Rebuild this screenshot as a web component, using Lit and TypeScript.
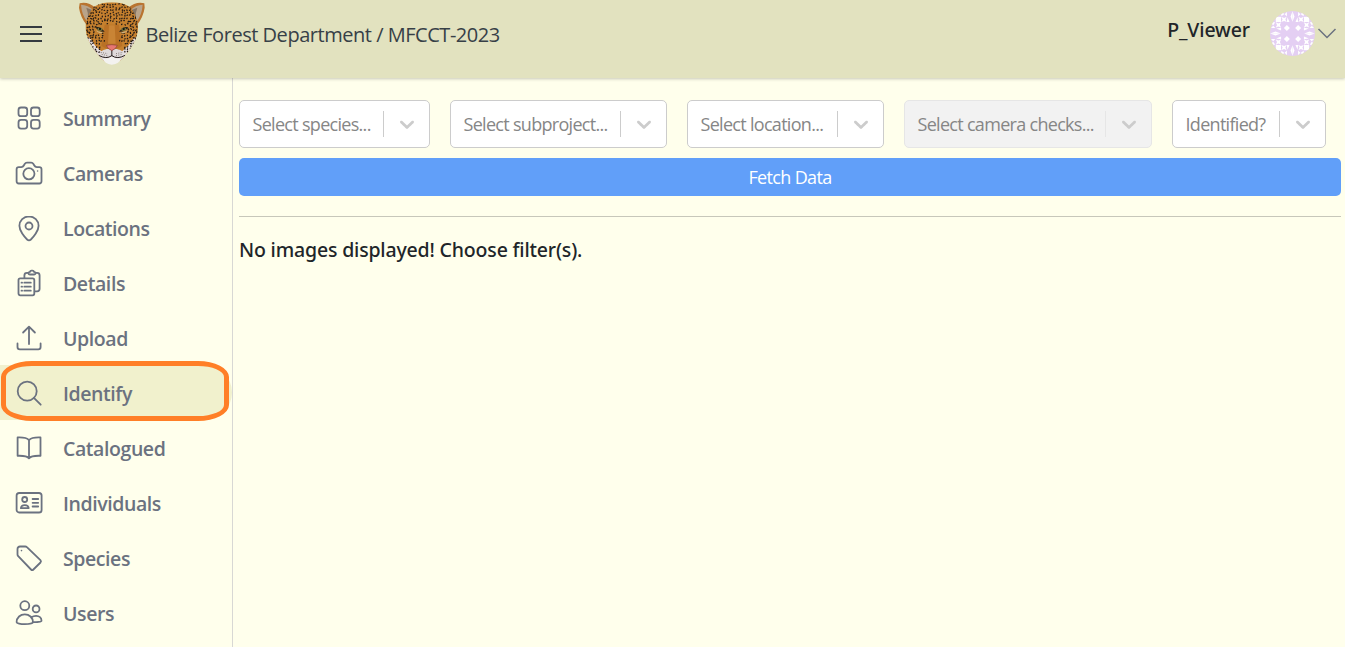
import { LitElement, html, svg, css } from "lit";
import { customElement, property } from "lit/decorators.js";

const icons: Record<string, unknown> = {
  summary: svg`<rect x="3.5" y="3.5" width="8.7" height="8.7" rx="2.5"/><rect x="16" y="3.5" width="8.7" height="8.7" rx="2.5"/><rect x="3.5" y="15.9" width="8.7" height="8.7" rx="2.5"/><rect x="16" y="15.9" width="8.7" height="8.7" rx="2.5"/>`,
  camera: svg`<path d="M3.8 8.1h2.5c1.3 0 1.9-.5 2.5-1.6l.9-1.6C10.300 4 11 3.700 11.900 3.700h4.300c.9 0 1.600.3 2.200 1.200l.9 1.600c.6 1.100 1.200 1.600 2.500 1.600h2.500c1.300 0 2.200.9 2.200 2.200v12c0 1.300-.9 2.200-2.200 2.200H3.800c-1.300 0-2.200-.9-2.200-2.200v-12c0-1.300.9-2.200 2.200-2.200z"/><circle cx="13.900" cy="14.800" r="5.600"/><circle cx="22.600" cy="12" r=".8" fill="currentColor" stroke="none"/>`,
  location: svg`<path d="M14 2.300c-5.400 0-9.600 4.200-9.600 9.500 0 5 5 11.200 7.700 13.700 1.200 1.100 2.600 1.100 3.800 0 2.700-2.500 7.700-8.700 7.700-13.700 0-5.300-4.200-9.500-9.600-9.500z"/><circle cx="14" cy="12" r="3.500"/>`,
  details: svg`<path d="M9.400 9.200V6.400c0-1.600.9-2.500 2.500-2.500h1.300M20.800 3.900h1.400c1.500 0 2.400.9 2.400 2.500v13.400c0 1.600-.9 2.500-2.500 2.500h-2.400"/><path d="M14.900 2.900c.3-.9.800-1.300 1.500-1.300h1.200c.7 0 1.200.4 1.500 1.300.8.100 1.500.5 1.500 1.100 0 .9-.7 1.500-1.700 1.500h-3.800c-1 0-1.700-.6-1.700-1.500 0-.6.700-1 1.500-1.100z"/><rect x="3.500" y="9.300" width="15.800" height="17" rx="1.700"/><path d="M9.300 13.700h6.500M9.300 17.700h6.500M9.300 21.700h6.500M6.500 13.700h.6M6.500 17.700h.6M6.500 21.700h.6"/>`,
  upload: svg`<path d="M14 20V2.600M8.100 8.500 14 2.600l5.900 5.900M2.500 19.500V23c0 1.500.8 2.300 2.300 2.300h18.500c1.500 0 2.300-.8 2.300-2.300v-3.500"/>`,
  search: svg`<circle cx="12.200" cy="12.200" r="9.500"/><path d="m18.900 18.900 6.800 6.800"/>`,
  book: svg`<path d="M14 6.100C12 3.900 7.800 3.300 2.600 3.500v18.300c5-.2 9.400.1 11.400 2.500 2-2.400 6.500-2.700 11.500-2.500V3.500C20.300 3.300 16 3.900 14 6.100zM14 6.100v18"/>`,
  card: svg`<rect x="1.600" y="4" width="25" height="19.500" rx="2.600"/><circle cx="9.700" cy="10.500" r="2.500"/><path d="M5.900 19.200c.2-2.200 1.800-3.100 3.900-3.100s3.700.9 3.900 3.100zM17.600 10h5.600M17.600 13.800h5.600M17.600 17.500h5.600"/>`,
  tag: svg`<path d="M5 2.500h5.200c.7 0 1.200.2 1.700.7l13.500 12.900c.8.800.8 1.600.1 2.400l-7.100 7c-.8.800-1.600.8-2.400 0L3.200 12.200c-.4-.5-.7-1-.7-1.700V5c0-1.500 1-2.500 2.500-2.500z"/><circle cx="6.500" cy="6.600" r=".8" fill="currentColor" stroke="none"/>`,
  users: svg`<circle cx="9.800" cy="6.700" r="4.500"/><circle cx="21.100" cy="9.900" r="3.400"/><path d="M1.600 23.300c0-5 3.800-7.900 8.200-7.900s8.100 2.900 8.100 7.900c0 1-3.700 1.800-8.100 1.800s-8.200-.8-8.200-1.800zM16.500 18.200c1.300-1 2.900-1.400 4.600-1.400 3.100 0 5.400 2 5.400 4.900 0 1.200-4.700 1.700-8.700 1.200"/>`,
};

@customElement("line-icon")
class LineIcon extends LitElement {
  @property() name = "";
  static styles = css`
    :host { display: block; width: 28px; height: 28px; }
    .glyph { display: block; width: 28px; height: 28px; fill: none; stroke: currentColor; stroke-width: 1.8; stroke-linecap: round; stroke-linejoin: round; }
  `;
  render() {
    return html`<svg class="glyph" viewBox="0 0 28 28">${icons[this.name]}</svg>`;
  }
}

@customElement("jaguar-logo")
class JaguarLogo extends LitElement {
  static styles = css`
    :host { display: block; width: 66px; height: 63px; }
    .face { display: block; width: 66px; height: 63px; }
  `;
  spots() {
    const out: unknown[] = [];
    let seed = 11;
    const rnd = () => ((seed = (seed * 16807) % 2147483647) / 2147483647);
    for (let y = 13; y < 160; y += 8.4) {
      for (let x = 50; x < 202; x += 8.6) {
        const px = x + rnd() * 5;
        const py = y + rnd() * 5;
        const angle = rnd() * 180;
        const dx = Math.abs(px - 125.5);
        const bridge = py > 74 && dx < (py < 130 ? 22 : 36);
        const eye = py > 80 && py < 99 && dx > 20 && dx < 48;
        if (bridge || eye) continue;
        const big = dx > 48 ? 3.6 : 2.8;
        out.push(svg`<ellipse cx=${px} cy=${py} rx=${big} ry="2.1" transform=${`rotate(${angle} ${px} ${py})`}/>`);
      }
    }
    return out;
  }
  render() {
    return html`<svg class="face" viewBox="27 8 198 189">
      <defs><clipPath id="head"><path d="M72 22Q95 9 125.500 9T179 22Q197 42 204 74Q206 102 193 128Q180 154 157 178Q146 190 125.500 190Q105 190 94 178Q71 154 58 128Q45 102 47 74Q54 42 72 22Z"/></clipPath></defs>
      <path fill="#b9742f" d="M29 12Q52 5 78 26L50 77Q31 53 27 25ZM223 12Q199 5 173 26L201 77Q220 53 224 25Z"/>
      <path fill="#b9a48a" d="M33 16Q53 16 73 34L52 68Q35 47 33 16ZM218 16Q198 16 178 34L199 68Q216 47 218 16Z"/>
      <path fill="#887663" d="M49 25L72 34L54 61Q56 41 49 25ZM202 25L179 34L197 61Q195 41 202 25Z"/>
      <g clip-path="url(#head)">
        <path fill="#c5802e" d="M40 5H212V190H40Z"/>
        <path fill="#e6dfe0" d="M45 108Q64 116 76 140L96 157Q125 137 155 157L176 138Q187 116 208 108V190H45Z"/>
        <path fill="#b97125" d="M104 76H147L157 139Q141 151 125.500 151T94 139Z"/>
        <path fill="#c98435" d="M117 78H134L137 133H114Z"/>
        <g fill="#241b15">${this.spots()}</g>
        <path fill="#cdb281" d="M78 93Q88 100 100 97L94 102Q82 101 78 93ZM173 93Q163 100 151 97L157 102Q169 101 173 93Z"/>
        <path fill="#29231b" d="M76 84Q91 79 104 97Q88 100 76 84ZM175 84Q160 79 147 97Q163 100 175 84Z"/>
        <ellipse cx="90" cy="90" rx="8" ry="5.500" fill="#77783f"/><ellipse cx="161" cy="90" rx="8" ry="5.500" fill="#77783f"/>
        <circle cx="90" cy="89" r="3.400" fill="#171713"/><circle cx="161" cy="89" r="3.400" fill="#171713"/>
        <path fill="#dfdadb" d="M125.500 151Q106 147 91 157Q91 176 110 177L125.500 169L141 177Q160 176 160 157Q145 147 125.500 151Z"/>
        <path fill="none" stroke="#241c1b" stroke-width="3" d="M86 168Q109 181 125.500 169Q142 181 165 168M125.500 150V170"/>
        <path fill="none" stroke="#5d4e49" stroke-width="2" stroke-dasharray="3 4" d="M92 159L113 163M95 165L113 169M138 163L159 159M138 169L156 165"/>
      </g>
      <path fill="#e77772" stroke="#884038" stroke-width="2" d="M109 138Q125.500 134 142 138Q139 148 125.500 154Q112 148 109 138Z"/>
      <path fill="#f3f2f0" d="M99 177Q112 180 125.500 172Q139 180 152 177Q149 195 125.500 196Q103 195 99 177Z"/>
    </svg>`;
  }
}

@customElement("identicon-avatar")
class IdenticonAvatar extends LitElement {
  static styles = css`
    :host { display: block; width: 45px; height: 45px; }
    .disc { display: block; width: 45px; height: 45px; border-radius: 50%; background: #e4cff3; }
  `;
  quarter() {
    return svg`
      <rect x="5.800" y="5.800" width="5.200" height="5.200"/>
      <path d="M16.900 13.900l3 3-3 3-3-3z"/>
      <path d="M11.300 1l3.200 2-3.200 2.300zM16.900 1l-2.200 2.200 2.200 2.200zM22.500 .2l-2 5.300 2 5.300zM11.300 5.800l2.800 1.200 2.500-1.200-1.200 2.600 1.200 2.700-2.500-1.200-2.800 1.200 1.300-2.700zM17.500 6.200l2 4.900h-2.700z"/>
      <path d="M1 11.300l2 3.200 2.300-3.200zM1 16.900l2.200-2.200 2.200 2.200zM.2 22.500l5.300-2 5.300 2zM5.800 11.300l1.200 2.800-1.200 2.500 2.600-1.200 2.700 1.200-1.200-2.500 1.200-2.800-2.700 1.300zM6.200 17.500l4.900 2v-2.700z"/>`;
  }
  render() {
    return html`<svg class="disc" viewBox="0 0 45 45"><g fill="#fff">
      <g>${this.quarter()}</g><g transform="translate(45 0) scale(-1 1)">${this.quarter()}</g>
      <g transform="translate(0 45) scale(1 -1)">${this.quarter()}</g><g transform="translate(45 45) scale(-1 -1)">${this.quarter()}</g>
    </g></svg>`;
  }
}

interface NavItem { icon: string; label: string; }
const nav: NavItem[] = [
  { icon: "summary", label: "Summary" },
  { icon: "camera", label: "Cameras" },
  { icon: "location", label: "Locations" },
  { icon: "details", label: "Details" },
  { icon: "upload", label: "Upload" },
  { icon: "search", label: "Identify" },
  { icon: "book", label: "Catalogued" },
  { icon: "card", label: "Individuals" },
  { icon: "tag", label: "Species" },
  { icon: "users", label: "Users" },
];
const filters = [
  { label: "Select species...", width: 191, gap: 20 },
  { label: "Select subproject...", width: 217, gap: 20 },
  { label: "Select location...", width: 197, gap: 20 },
  { label: "Select camera checks...", width: 248, gap: 20, disabled: true },
  { label: "Identified?", width: 154, gap: 0 },
];

@customElement("app-root")
class AppRoot extends LitElement {
  static styles = css`
    :host { display: block; height: 647px; overflow: hidden; background: #ffffec; color: #212529; font-family: "Segoe UI", "Open Sans", "Noto Sans", sans-serif; }
    * { box-sizing: border-box; }
    .header { display: flex; height: 78px; background: #e2e2bf; box-shadow: 0 1px 3px rgba(0,0,0,.22); position: relative; }
    .burger { width: 24px; height: 24px; margin: 22px 0 0 19px; }
    .logo { margin: 2px 0 0 36px; }
    .title { margin: 20px 0 0 .5px; font-size: 20px; line-height: 30px; letter-spacing: -.47px; color: #374047; white-space: nowrap; }
    .user { margin: 15px 20px 0 auto; font-family: "Segoe UI", "Noto Sans", sans-serif; font-size: 19.500px; line-height: 30px; font-weight: 500; letter-spacing: -.1px; }
    .avatar { margin-top: 11px; }
    .caret { width: 20px; height: 14px; margin: 26px 8px 0 2px; }
    .body { display: flex; height: 569px; }
    .side { width: 233px; border-right: 1px solid #d8d8d4; padding-top: 12px; flex: none; }
    .item { display: flex; align-items: center; height: 55px; padding: 0 0 0 15px; color: #6b7280; }
    .label { margin: 3px 0 0 20px; font-size: 19.500px; line-height: 28px; font-weight: 600; white-space: nowrap; letter-spacing: -.42px; }
    .active { position: relative; background: #f1f1cd; border-radius: 0 28px 28px 0; height: 55px; }
    .ring { position: absolute; left: 1px; top: -4px; width: 228px; height: 60px; border: 5px solid #ff7f27; border-radius: 31px / 16px; }
    .main { flex: 1; min-width: 0; padding: 22px 4px 0 6px; }
    .filters { display: flex; }
    .select { display: flex; align-items: center; height: 48px; border: 1px solid #ccc; border-radius: 5px; background: #fff; flex: none; }
    .disabled { background: #f2f2f2; border-color: #e6e6e6; }
    .hint { flex: 1; padding: 0 0 1px 12.500px; font-size: 18px; letter-spacing: -.7px; color: #868686; font-weight: 400; white-space: nowrap; }
    .bar { width: 1px; height: 26px; background: #ccc; }
    .disabled .bar { background: #e6e6e6; }
    .chev { width: 24px; height: 24px; margin: 0 10.500px 0 10.500px; fill: #ccc; flex: none; }
    .fetch { display: block; width: 100%; height: 38px; margin-top: 10px; padding: 0; border: 0; border-radius: 5px; background: #619ff9; color: #fff; font: 400 18px/34px "Segoe UI", "Open Sans", sans-serif; letter-spacing: -.65px; }
    .rule { height: 1px; margin-top: 20px; background: #c7c7ba; }
    .empty { margin: 18px 0 0; font-family: "Segoe UI", "Noto Sans", "Open Sans", sans-serif; font-size: 19.500px; line-height: 30px; font-weight: 500; letter-spacing: -.17px; }
  `;
  render() {
    return html`
      <header class="header">
        <svg class="burger" viewBox="0 0 24 24" stroke="#343a40" stroke-width="2"><path d="M1 5h22M1 12h22M1 19h22"/></svg>
        <jaguar-logo class="logo"></jaguar-logo>
        <div class="title"><span>Belize Forest Department / MFCCT-2023</span></div>
        <div class="user">P_Viewer</div>
        <identicon-avatar class="avatar"></identicon-avatar>
        <svg class="caret" viewBox="0 0 20 14" fill="none" stroke="#6b7280" stroke-width="1.500"><path d="m1.500 3 8.500 8.500L18.500 3"/></svg>
      </header>
      <div class="body">
        <nav class="side">${nav.map((n) => html`
          <div class="item ${n.icon === "search" ? "active" : ""}">
            <line-icon name=${n.icon}></line-icon><span class="label">${n.label}</span>
            ${n.icon === "search" ? html`<div class="ring"></div>` : ""}
          </div>`)}
        </nav>
        <main class="main">
          <div class="filters">${filters.map((f) => html`
            <div class="select ${f.disabled ? "disabled" : ""}" style="width:${f.width}px;margin-right:${f.gap}px">
              <span class="hint">${f.label}</span><span class="bar"></span>
              <svg class="chev" viewBox="0 0 20 20"><path d="M4.516 7.548c.436-.446 1.043-.481 1.576 0L10 11.295l3.908-3.747c.533-.481 1.141-.446 1.574 0 .436.445.408 1.197 0 1.615-.406.418-4.695 4.502-4.695 4.502a1.095 1.095 0 0 1-1.576 0S4.924 9.581 4.516 9.163s-.436-1.170 0-1.615z"/></svg>
            </div>`)}
          </div>
          <button class="fetch">Fetch Data</button>
          <div class="rule"></div>
          <p class="empty">No images displayed! Choose filter(s).</p>
        </main>
      </div>`;
  }
}
